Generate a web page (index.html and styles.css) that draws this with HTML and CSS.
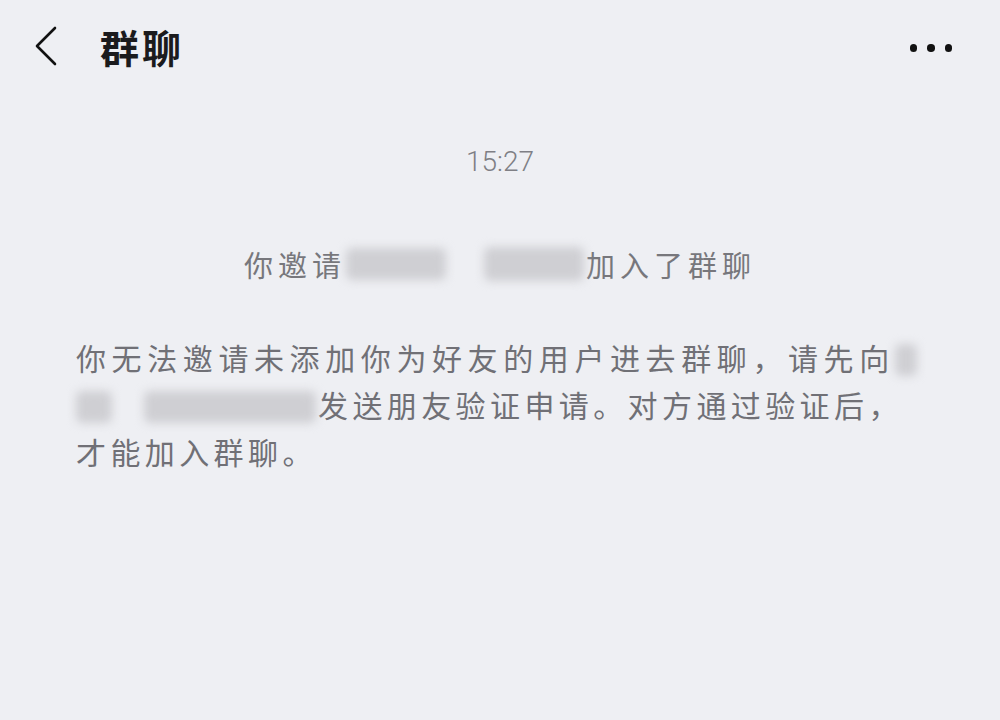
FILE: index.html
```html
<!DOCTYPE html>
<html lang="zh-CN">
<head>
<meta charset="utf-8">
<title>群聊</title>
<link rel="stylesheet" href="styles.css">
</head>
<body>
<div class="screen">
  <header class="topbar">
    <div class="left">
      <svg class="back" width="28" height="42" viewBox="0 0 28 42"><path d="M23 3 L5 21 L23 39" fill="none" stroke="#111" stroke-width="2.6" stroke-linecap="round" stroke-linejoin="round"/></svg>
      <span class="title">群聊</span>
    </div>
    <div class="more"><span class="dot"></span><span class="dot"></span><span class="dot"></span></div>
  </header>
  <main class="chat">
    <div class="time">15:27</div>
    <div class="sys">你邀请<span class="blur b1"></span><span class="gap"></span><span class="blur b2"></span>加入了群聊</div>
    <p class="notice"><span class="wide">你无法邀请未添加你为好友的用户进去群聊，请先向</span><span class="blur nb b3"></span><br><span class="blur nb b4"></span><span class="blur nb b5"></span>发送朋友验证申请。对方通过验证后，<br>才能加入群聊。</p>
  </main>
</div>
</body>
</html>
```
FILE: styles.css
```css
html, body {
  margin: 0;
  padding: 0;
}
body {
  background: #eeeff3;
  font-family: "Noto Sans CJK SC", "Noto Sans", sans-serif;
}
.screen {
  width: 1000px;
  height: 720px;
  background: #eeeff3;
  overflow: hidden;
}
.topbar {
  height: 100px;
  display: flex;
  align-items: center;
  justify-content: space-between;
  padding: 0 48px 0 32px;
  box-sizing: border-box;
  margin-top: -4px;
}
.left {
  display: flex;
  align-items: center;
}
.back {
  display: block;
}
.title {
  margin-left: 40px;
  font-size: 39px;
  font-weight: 700;
  color: #1b1b1d;
  letter-spacing: 3px;
}
.more {
  display: flex;
  gap: 10px;
  align-items: center;
  margin-top: 4px;
}
.dot {
  width: 7.5px;
  height: 7.5px;
  border-radius: 50%;
  background: #111;
}
.chat {
  display: flex;
  flex-direction: column;
  align-items: center;
}
.time {
  margin-top: 46px;
  font-family: "Roboto", "Noto Sans", sans-serif;
  font-weight: 300;
  font-size: 28px;
  color: #7f7f85;
  line-height: 40px;
}
.sys {
  margin-top: 60px;
  font-size: 29px;
  letter-spacing: 5px;
  color: #77777c;
  line-height: 44px;
  display: flex;
  align-items: center;
}
.blur {
  display: inline-block;
  background: #cfcfd3;
  filter: blur(5px);
  border-radius: 6px;
  vertical-align: middle;
}
.b1 { width: 100px; height: 32px; }
.gap { display: inline-block; width: 38px; }
.b2 { width: 100px; height: 34px; margin-right: 2px; }
.notice {
  align-self: stretch;
  margin: 48px 0 0 76px;
  font-size: 30px;
  letter-spacing: 4.4px;
  line-height: 47px;
  color: #707076;
}
.wide {
  letter-spacing: 5.6px;
}
.notice .nb {
  height: 32px;
  vertical-align: -6px;
}
.b3 { width: 22px; }
.b4 { width: 36px; }
.b5 { width: 172px; margin-left: 32px; margin-right: 2px; }
```
